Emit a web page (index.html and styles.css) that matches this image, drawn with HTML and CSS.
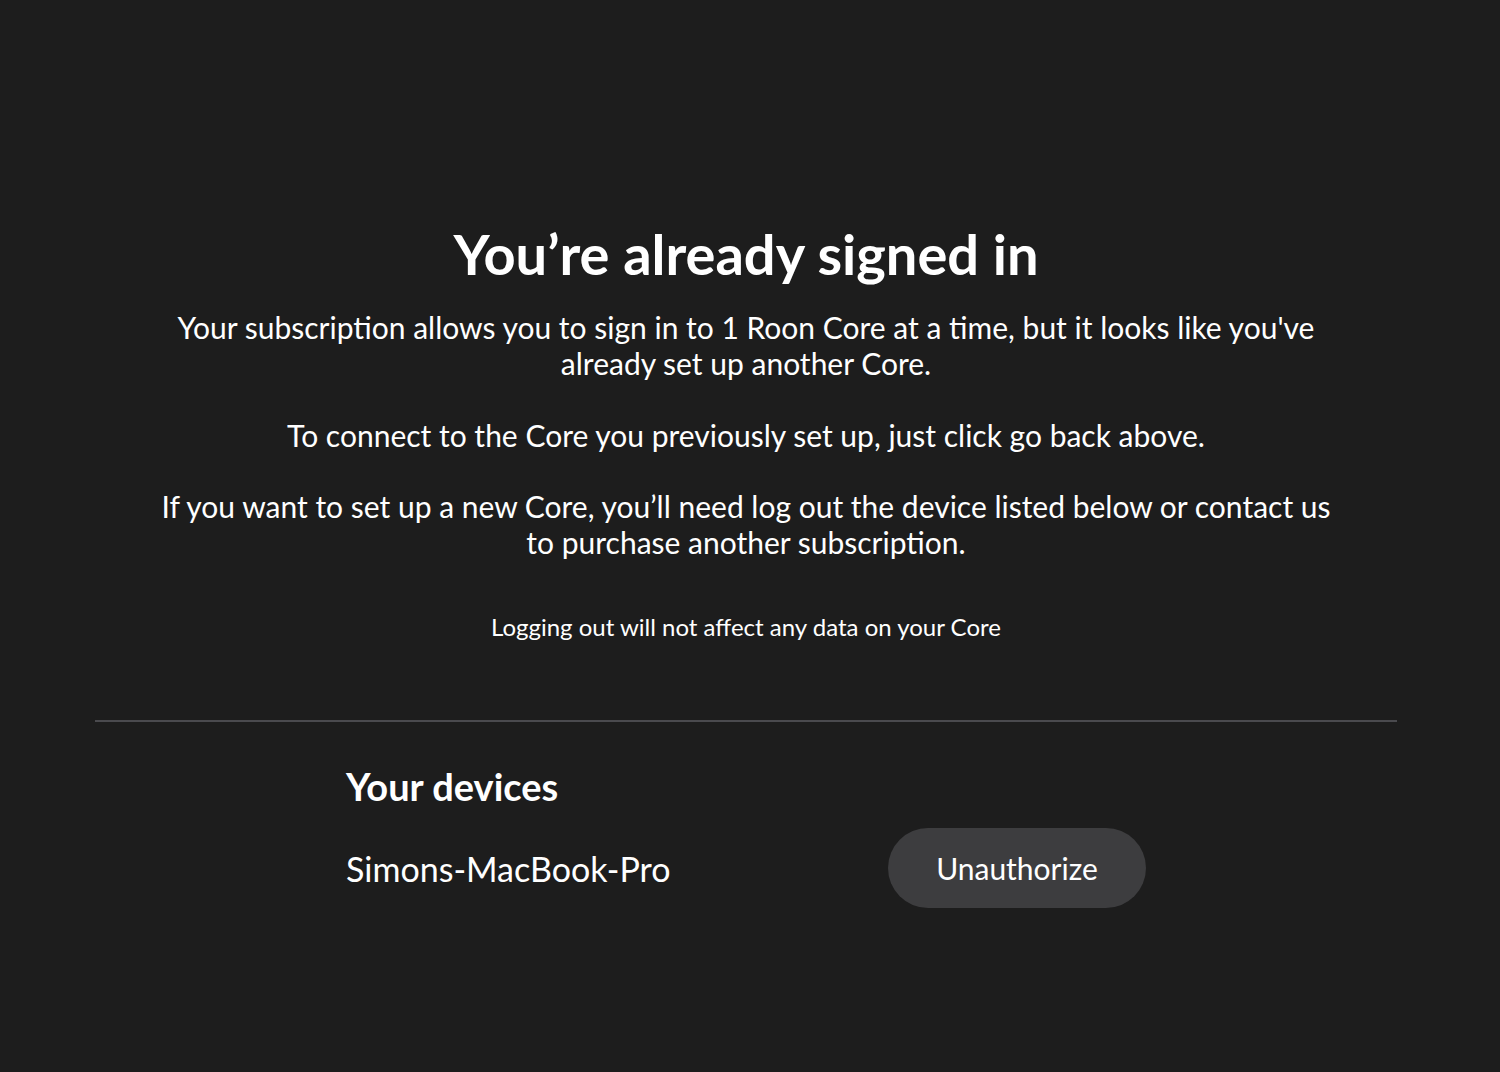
FILE: index.html
```html
<!DOCTYPE html>
<html lang="en">
<head>
    <meta charset="UTF-8">
    <title>Already signed in</title>
    <link rel="stylesheet" href="styles.css">
</head>
<body>
    <div class="page">
        <div class="intro">
            <h1>You’re already signed in</h1>
            <p class="message">Your subscription allows you to sign in to 1 Roon Core at a time, but it looks like you've already set up another Core.</p>
            <p class="message">To connect to the Core you previously set up, just click go back above.</p>
            <p class="message">If you want to set up a new Core, you’ll need log out the device listed below or contact us to purchase another subscription.</p>
            <p class="note">Logging out will not affect any data on your Core</p>
        </div>

        <hr class="divider">

        <div class="devices">
            <h2>Your devices</h2>
            <div class="device-row">
                <span class="device-name">Simons-MacBook-Pro</span>
                <button class="pill-button">Unauthorize</button>
            </div>
        </div>
    </div>
</body>
</html>
```

FILE: styles.css
```css
body {
    margin: 0;
    background-color: #1d1d1d;
    color: #ffffff;
    font-family: Lato, "Open Sans", sans-serif;
}
.page {
    width: 1302px;
    margin: 0 0 0 95px;
    padding-top: 219px;
}
.intro {
    max-width: 1200px;
    margin: 0 auto;
    text-align: center;
}
h1 {
    font-size: 56px;
    font-weight: 700;
    line-height: 70px;
    margin: 0 0 20px;
}
.message {
    font-size: 30px;
    line-height: 36px;
    margin: 0 0 36px;
}
.message:nth-of-type(3) {
    margin-top: -1px;
}
.note {
    font-size: 24px;
    line-height: 28px;
    margin: 53px 0 0;
}
.divider {
    border: none;
    border-top: 2px solid #4a4a4e;
    margin: 79px 0 0;
}
.devices {
    width: 800px;
    margin: 0 auto;
    padding-top: 40px;
}
h2 {
    font-size: 38px;
    font-weight: 700;
    line-height: 48px;
    margin: 0 0 18px;
}
.device-row {
    display: flex;
    align-items: center;
    justify-content: space-between;
}
.device-name {
    font-size: 34px;
}
.pill-button {
    width: 258px;
    height: 80px;
    border: none;
    border-radius: 40px;
    background-color: #3d3d3f;
    color: #ffffff;
    font-family: Lato, "Open Sans", sans-serif;
    font-size: 30px;
    cursor: pointer;
}
```
